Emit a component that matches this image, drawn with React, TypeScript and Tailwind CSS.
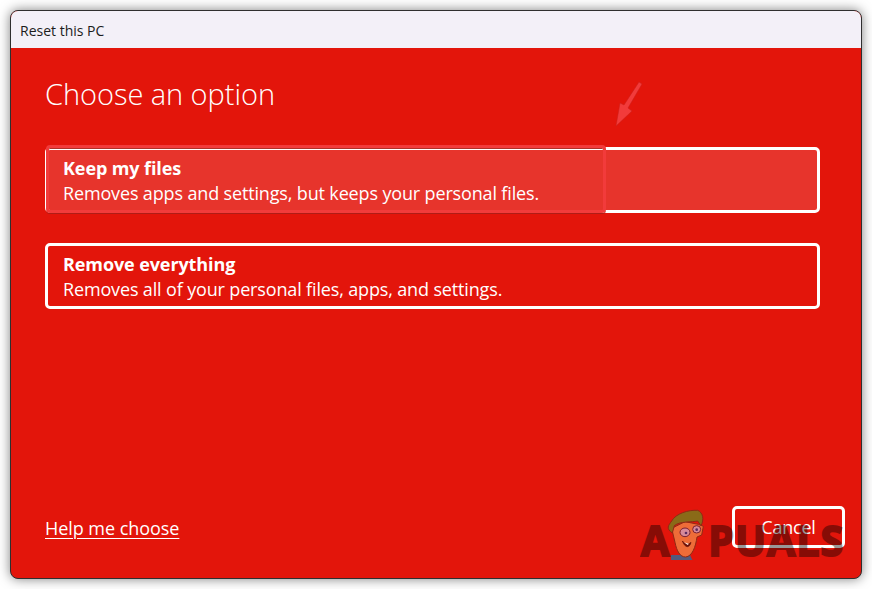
export default function App() {
  const font = { fontFamily: '"Open Sans", "Noto Sans", sans-serif' };
  return (
    <div className="w-[872px] h-[589px] bg-white pl-[10px] pt-[10px] overflow-hidden" style={font}>
      <div className="relative w-[852px] h-[569px] rounded-[8px] overflow-hidden flex flex-col border border-[#2f2f2f] shadow-[0_0_12px_rgba(0,0,0,0.5)] bg-[#e3150b]">
        <div className="h-[37px] shrink-0 bg-[#f3f0f8] flex items-center pl-[9px] pt-[2px] text-[14px] text-[#1c1c1c]">
          Reset this PC
        </div>
        <div className="flex-1 flex flex-col pl-[34px] pr-[41px] pt-[27px] pb-[30px] text-white">
          <h1 className="text-[29px] leading-[38px] font-light tracking-[-0.05px]">Choose an option</h1>
          <div className="mt-[34px] relative h-[66px] rounded-[5px] border-[3px] border-white bg-[#e7342c] pl-[15px] pt-[2px] flex flex-col justify-center">
            <div className="text-[18px] leading-[25px] font-bold tracking-[-0.1px]">Keep my files</div>
            <div className="text-[18px] leading-[25px] tracking-[-0.15px]">Removes apps and settings, but keeps your personal files.</div>
            <div className="absolute left-[-2px] top-[-5px] w-[560px] h-[68px] rounded-[4px] border-[3px] border-[#f23b3b] shadow-[inset_0_1px_0_#b03028,0_1px_0_#b01c16]" />
          </div>
          <div className="mt-[30px] h-[66px] rounded-[5px] border-[3px] border-white pl-[15px] pt-[2px] flex flex-col justify-center">
            <div className="text-[18px] leading-[25px] font-bold tracking-[-0.1px]">Remove everything</div>
            <div className="text-[18px] leading-[25px] tracking-[-0.15px]">Removes all of your personal files, apps, and settings.</div>
          </div>
          <div className="mt-auto flex items-center justify-between">
            <a className="text-[18px] leading-[24px] underline underline-offset-[3px] decoration-1 mt-[2px] tracking-[-0.05px]">Help me choose</a>
            <div className="w-[113px] h-[42px] -mr-[25px] rounded-[5px] border-[3px] border-white flex items-center justify-center text-[18px] tracking-[-0.2px]">
              Cancel
            </div>
          </div>
        </div>
        <svg className="absolute left-[600px] top-[70px]" width="36" height="50" viewBox="0 0 36 50">
          <path d="M28 1 L31 3 L17 27 L21 30 L5 45 L9 22 L13 24 Z" fill="#f23b3b" stroke="#c9201c" strokeWidth="0.5" />
        </svg>
        <div className="absolute left-[630px] top-[506px] flex items-center text-black opacity-[0.4] font-bold text-[41px] leading-[46px] tracking-[1px] [-webkit-text-stroke:2px_black]">
          <span>A</span>
          <span className="w-[38px]" />
          <span>PUALS</span>
        </div>
        <svg className="absolute left-[624px] top-[494px]" width="110" height="60" viewBox="0 0 330 180">
          <path d="M108 150 L165 150 L172 165 L108 165 Z" fill="#54597c" />
          <path d="M110 70 L120 112 C125 138 135 156 152 156 C172 154 182 125 186 96 L200 90 L205 64 L190 58 L150 50 Z" fill="#ee6c38" stroke="#8f2a14" strokeWidth="3" />
          <path d="M112 84 C92 70 100 62 110 48 C122 26 160 14 188 16 C204 22 208 44 198 62 L188 48 C170 52 135 48 118 62 Z" fill="#8a6a18" stroke="#8f2a14" strokeWidth="3" />
          <ellipse cx="150" cy="82" rx="15" ry="13" fill="#d68a9a" stroke="#7a2030" strokeWidth="3" />
          <ellipse cx="185" cy="73" rx="12" ry="11" fill="#d68a9a" stroke="#7a2030" strokeWidth="3" />
          <circle cx="153" cy="84" r="4" fill="#5a2a60" />
          <circle cx="185" cy="74" r="4" fill="#5a2a60" />
          <path d="M142 108 C150 118 160 120 168 112 C164 130 150 130 142 108 Z" fill="#6a1008" stroke="#6a1008" strokeWidth="2" />
          <path d="M147 112 L162 116 L158 120 Z" fill="#ffe8e0" />
        </svg>
      </div>
    </div>
  );
}
